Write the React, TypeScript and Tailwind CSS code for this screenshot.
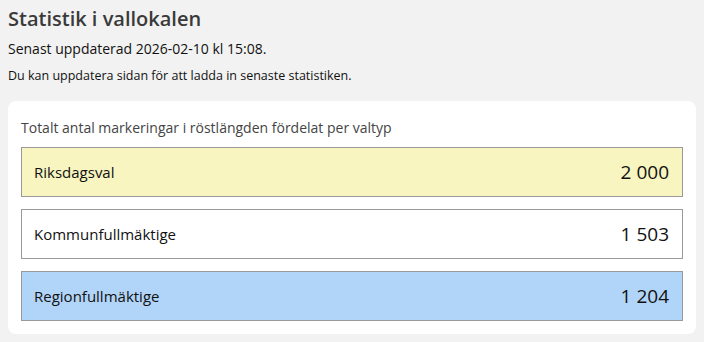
import React from "react";

interface Row {
  label: string;
  value: string;
  bg: string;
}

const rows: Row[] = [
  { label: "Riksdagsval", value: "2 000", bg: "bg-[#f8f5c0]" },
  { label: "Kommunfullmäktige", value: "1 503", bg: "bg-white" },
  { label: "Regionfullmäktige", value: "1 204", bg: "bg-[#b1d5f8]" },
];

export default function App() {
  return (
    <div className="min-h-screen bg-[#f2f2f2] px-2 pt-[6px] pb-2 font-['Open_Sans',sans-serif] text-[#222]">
      <h1 className="text-[20px] leading-[26px] font-semibold text-[#3a3a3a]">Statistik i vallokalen</h1>
      <p className="mt-[7px] text-[14px] leading-[20px] text-[#111]">Senast uppdaterad 2026-02-10 kl 15:08.</p>
      <p className="mt-[8px] text-[12.5px] leading-[18px] text-[#111]">
        Du kan uppdatera sidan för att ladda in senaste statistiken.
      </p>

      <div className="mt-[16px] rounded-lg bg-white px-[13px] pt-[17px] pb-[13px]">
        <div className="text-[14px] leading-[20px] text-[#444]">
          Totalt antal markeringar i röstlängden fördelat per valtyp
        </div>
        <div className="mt-[9px] flex flex-col gap-[12px]">
          {rows.map((r) => (
            <div
              key={r.label}
              className={`flex h-[50px] items-center justify-between border border-[#999] pl-[12px] pr-[13px] ${r.bg}`}
            >
              <span className="text-[15px] text-[#111]">{r.label}</span>
              <span className="text-[19px] text-[#111]">{r.value}</span>
            </div>
          ))}
        </div>
      </div>
    </div>
  );
}
